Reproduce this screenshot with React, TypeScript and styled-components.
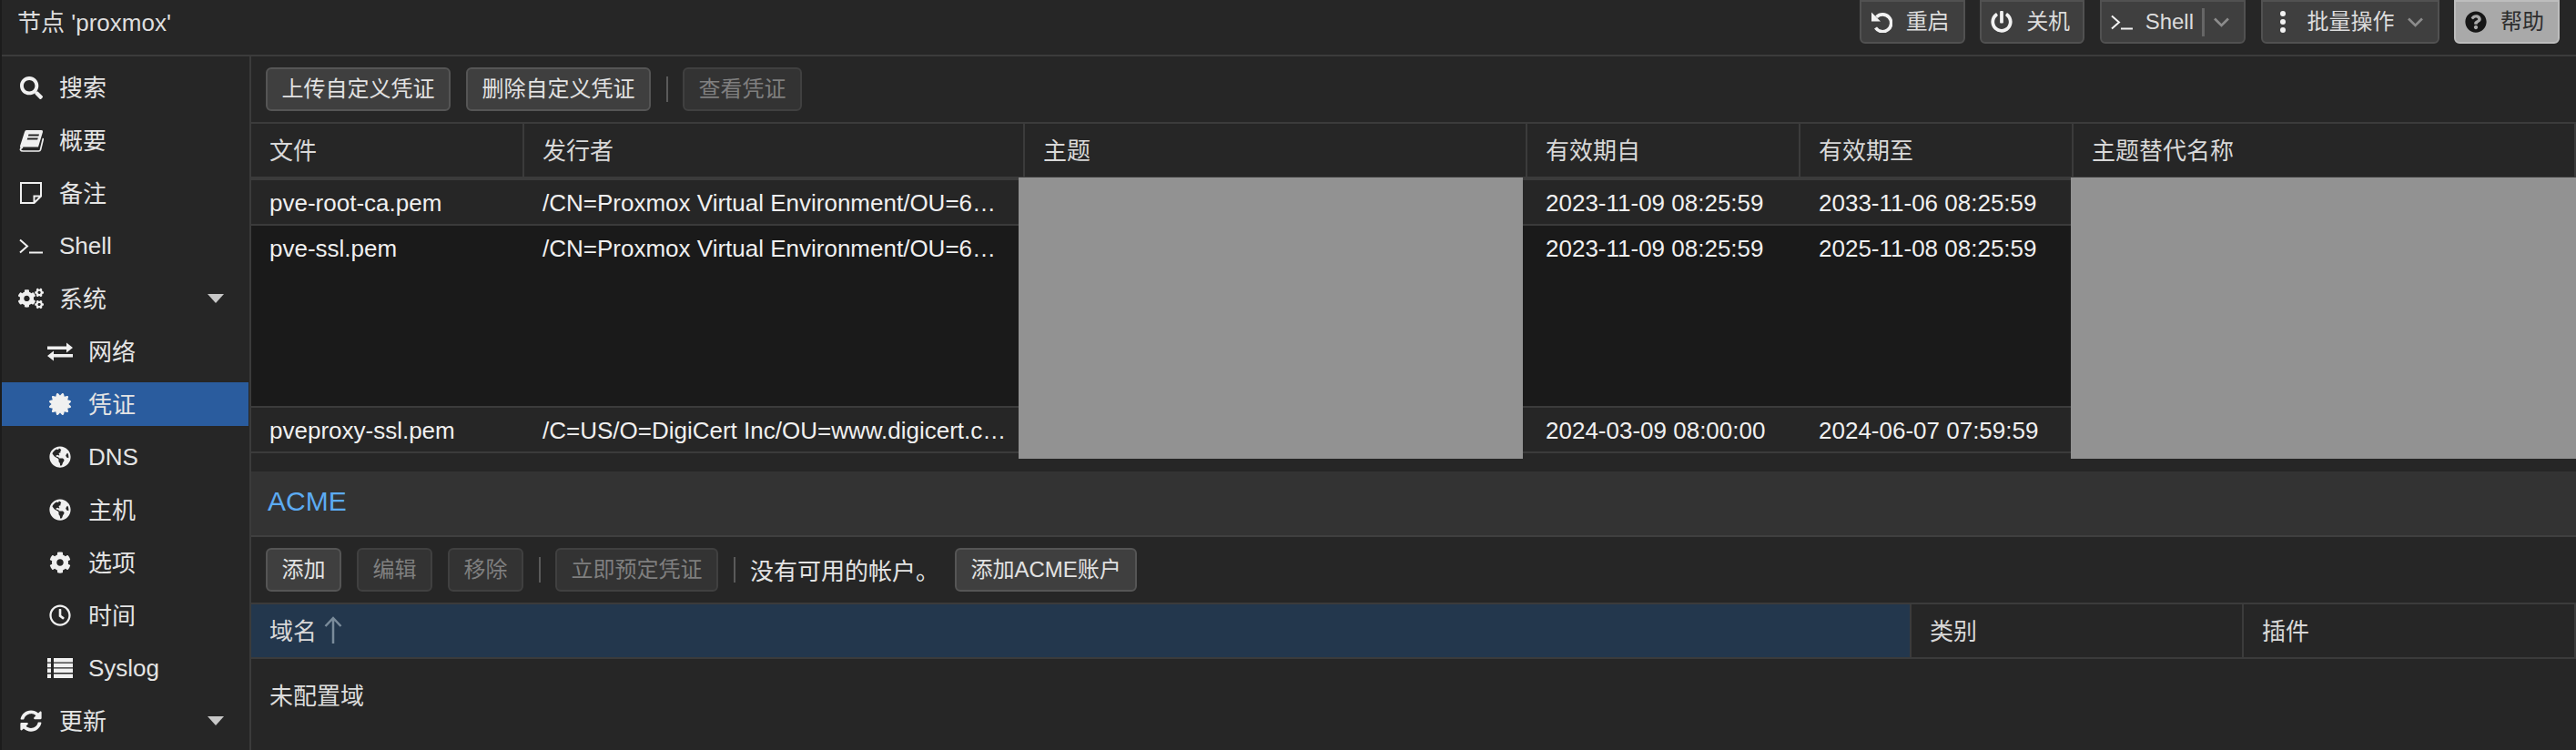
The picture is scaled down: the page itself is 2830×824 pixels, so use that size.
import React from 'react';
import styled, { createGlobalStyle } from 'styled-components';
import {
  FaSearch, FaCogs, FaCertificate, FaGlobeAmericas, FaCog, FaRegClock, FaSyncAlt,
  FaPowerOff, FaQuestionCircle,
} from 'react-icons/fa';

const Global = createGlobalStyle`
  html, body { margin: 0; padding: 0; background: #262626; }
  body { font-family: "Liberation Sans", "Noto Sans CJK SC", sans-serif; overflow: hidden; }
  * { box-sizing: border-box; }
`;

const Page = styled.div`
  width: 2830px; height: 824px; display: flex; flex-direction: column;
  background: #262626; color: #ececec; border-left: 2px solid #1c1c1c; overflow: hidden;
`;
const TopBar = styled.header`
  height: 62px; flex: none; display: flex; justify-content: space-between; align-items: flex-start;
  border-bottom: 2px solid #3b3b3b; padding-right: 18px;
`;
const NodeTitle = styled.div`
  font-size: 26px; line-height: 50px; padding-left: 17px; color: #dedede;
`;
const TopActions = styled.div`
  display: flex; gap: 16.5px;
`;
const TopButton = styled.button<{ $help?: boolean }>`
  height: 48px; display: flex; align-items: center; padding: 0 0 0 10px; margin: 0;
  border-radius: 0 0 6px 6px; border: 2px solid ${p => (p.$help ? '#bdbdbd' : '#515151')};
  background: ${p => (p.$help ? '#a9a9a9' : '#3f3f3f')};
  color: ${p => (p.$help ? '#2e2e2e' : '#dcdcdc')};
  font: inherit; font-size: 24px; line-height: 44px;
`;
const TopIcon = styled.span<{ $dark?: boolean }>`
  width: 24px; height: 24px; display: flex; align-items: center; justify-content: center;
  color: ${p => (p.$dark ? '#161616' : '#f2f2f2')}; flex: none;
`;
const TopLabel = styled.span<{ $left: number; $right: number }>`
  margin-left: ${p => p.$left}px; margin-right: ${p => p.$right}px; white-space: nowrap;
`;
const SplitBar = styled.span`
  width: 3px; height: 31px; background: #666; flex: none; margin-right: 10px;
`;
const Chevron = styled.svg`
  width: 17px; height: 11px; flex: none; display: block; margin-right: 16px;
`;

const Body = styled.div`
  flex: 1; display: flex; min-height: 0;
`;
const Sidebar = styled.nav`
  width: 274px; flex: none; border-right: 2px solid #3b3b3b; padding-top: 10px;
  display: flex; flex-direction: column; gap: 10px;
`;
const NavRow = styled.div<{ $sub?: boolean; $active?: boolean }>`
  height: 48px; flex: none; margin-right: 1px; display: flex; align-items: center;
  padding-left: ${p => (p.$sub ? 50 : 18)}px;
  background: ${p => (p.$active ? '#2a5c9e' : 'transparent')};
  font-size: 26px; color: #e4e4e4;
`;
const NavIcon = styled.span`
  width: 28px; height: 28px; display: flex; align-items: center; justify-content: center;
  color: #f0f0f0; flex: none; margin-right: 17px;
`;
const NavLabel = styled.span<{ $cjk: boolean }>`
  padding-bottom: ${p => (p.$cjk ? 4 : 0)}px;
`;
const NavCaret = styled.span`
  margin-left: auto; margin-right: 27px; width: 0; height: 0;
  border-left: 9px solid transparent; border-right: 9px solid transparent;
  border-top: 10px solid #c8c8c8;
`;

const Main = styled.main`
  flex: 1; min-width: 0; display: flex; flex-direction: column;
`;
const Toolbar = styled.div`
  height: 74px; flex: none; display: flex; align-items: center; gap: 17px; padding: 0 16px;
  border-bottom: 2px solid #3b3b3b;
`;
const ActionButton = styled.button<{ $disabled?: boolean }>`
  height: 48px; padding: 0 15.5px; margin: 0; border-radius: 6px; white-space: nowrap;
  border: 2px solid ${p => (p.$disabled ? '#404040' : '#555')};
  background: ${p => (p.$disabled ? '#333' : '#3f3f3f')};
  color: ${p => (p.$disabled ? '#7f7f7f' : '#e2e2e2')};
  font: inherit; font-size: 24px; line-height: 44px;
`;
const ToolSep = styled.span`
  width: 2px; height: 28px; background: #5a5a5a; flex: none; margin-right: -1px;
`;
const ToolText = styled.span`
  font-size: 26px; color: #e4e4e4; white-space: nowrap; padding-bottom: 2px;
`;

const Table = styled.section`
  position: relative; flex: none;
`;
const certCols = '300px 550px 552px 300px 300px 1fr';
const HeadRow = styled.div<{ $cols: string }>`
  display: grid; grid-template-columns: ${p => p.$cols}; height: 62px;
  border-bottom: 4px solid #3b3b3b;
`;
const HeadCell = styled.div<{ $sorted?: boolean }>`
  display: flex; align-items: center; gap: 8px; padding: 0 0 3px 20px; font-size: 26px; color: #d8d8d8;
  border-right: 2px solid #3b3b3b; height: 100%;
  background: ${p => (p.$sorted ? '#23374d' : 'transparent')};
`;
const Row = styled.div<{ $tall?: boolean; $dark?: boolean }>`
  display: grid; grid-template-columns: ${certCols};
  height: ${p => (p.$tall ? 200 : 50)}px;
  background: ${p => (p.$dark ? '#1a1a1a' : '#262626')};
  border-bottom: 2px solid #3b3b3b;
`;
const Cell = styled.div`
  padding: 0 0 0 20px; font-size: 26px; line-height: 50px; color: #f0f0f0;
  white-space: nowrap; min-width: 0;
`;
const Redaction = styled.div<{ $left: number; $width: number }>`
  position: absolute; top: 59px; height: 309px; left: ${p => p.$left}px; width: ${p => p.$width}px;
  background: #929292;
`;
const PanelTitle = styled.h2`
  margin: 20px 0 0; height: 72px; flex: none; background: #333; border-bottom: 2px solid #3f3f3f;
  font-size: 30px; font-weight: 400; line-height: 66px; padding-left: 18px; color: #5cabf2;
`;
const AcmeHead = styled(HeadRow)`
  height: 60px; border-bottom-width: 2px;
`;
const EmptyNote = styled.div`
  font-size: 26px; color: #dcdcdc; padding: 20px 20px 0;
`;

const Svg = ({ w, h, children }: { w: number; h: number; children: React.ReactNode }) => (
  <svg width={w} height={h} viewBox={`0 0 ${w} ${h}`} fill="currentColor" aria-hidden="true">{children}</svg>
);
const BookIcon = () => (
  <Svg w={27} h={25}>
    <path d="M8 1H24.5Q26.5 1 26 3L21 19.5H5Q2.5 19.5 1.5 21L1 18.5L6 3Q6.5 1 8 1Z" />
    <path d="M4 20Q1 21 1.5 22.6Q2 24 4.5 24H21.5Q23 24 23.5 22.5L26.5 10" fill="none" stroke="currentColor" strokeWidth="1.7" />
    <path d="M10.5 5.5H22L21.4 7.5H9.9ZM9.3 9.5H20.8L20.2 11.5H8.7Z" fill="#262626" />
  </Svg>
);
const NoteIcon = () => (
  <Svg w={24} h={24}>
    <path d="M1 1H23V15.5L15.5 23H1Z M15.5 23V15.5H23" fill="none" stroke="currentColor" strokeWidth="2" />
  </Svg>
);
const TermIcon = ({ w = 26 }: { w?: number }) => (
  <Svg w={w} h={17}>
    <path d="M1 1.5L9 8.5L1 15.5" fill="none" stroke="currentColor" strokeWidth="2" />
    <path d={`M11 15.5H${w}`} fill="none" stroke="currentColor" strokeWidth="2" />
  </Svg>
);
const ExchangeIcon = () => (
  <Svg w={28} h={21}>
    <path d="M0 4.5H21V0.5L28 6L21 11.5V8H0Z" />
    <path d="M28 13H7V9.5L0 15L7 20.5V16.5H28Z" />
  </Svg>
);
const ListIcon = () => (
  <Svg w={28} h={22}>
    <path d="M0 0H4V4.5H0ZM7 0H28V4.5H7ZM0 5.8H4V10.3H0ZM7 5.8H28V10.3H7ZM0 11.6H4V16.1H0ZM7 11.6H28V16.1H7ZM0 17.4H4V22H0ZM7 17.4H28V22H7Z" />
  </Svg>
);
const UndoIcon = () => (
  <Svg w={24} h={24}>
    <path d="M6.5 6.8A9.4 9.4 0 1 1 5.5 18.6" fill="none" stroke="currentColor" strokeWidth="3.6" />
    <path d="M1 1.5V11.5H11Z" />
  </Svg>
);
const DotsIcon = () => (
  <Svg w={8} h={26}>
    <circle cx="4" cy="4" r="3" /><circle cx="4" cy="13" r="3" /><circle cx="4" cy="22" r="3" />
  </Svg>
);
const SmallChevron = () => (
  <Chevron viewBox="0 0 17 11">
    <path d="M1 1.5L8.5 9L16 1.5" fill="none" stroke="#8c8c8c" strokeWidth="2.6" />
  </Chevron>
);
const SortArrow = () => (
  <svg width="20" height="30" viewBox="0 0 20 30" aria-hidden="true">
    <path d="M10 30V2M1.5 11L10 2L18.5 11" fill="none" stroke="#7a8b9a" strokeWidth="2.5" />
  </svg>
);

type Nav = { label: string; icon: React.ReactNode; sub?: boolean; active?: boolean; caret?: boolean; latin?: boolean };
const nav: Nav[] = [
  { label: '搜索', icon: <FaSearch size={25} /> },
  { label: '概要', icon: <BookIcon /> },
  { label: '备注', icon: <NoteIcon /> },
  { label: 'Shell', icon: <TermIcon />, latin: true },
  { label: '系统', icon: <FaCogs size={30} />, caret: true },
  { label: '网络', icon: <ExchangeIcon />, sub: true },
  { label: '凭证', icon: <FaCertificate size={24} />, sub: true, active: true },
  { label: 'DNS', icon: <FaGlobeAmericas size={24} />, sub: true, latin: true },
  { label: '主机', icon: <FaGlobeAmericas size={24} />, sub: true },
  { label: '选项', icon: <FaCog size={24} />, sub: true },
  { label: '时间', icon: <FaRegClock size={24} />, sub: true },
  { label: 'Syslog', icon: <ListIcon />, sub: true, latin: true },
  { label: '更新', icon: <FaSyncAlt size={24} />, caret: true },
];

const certs = [
  { file: 'pve-root-ca.pem', issuer: '/CN=Proxmox Virtual Environment/OU=6…', from: '2023-11-09 08:25:59', to: '2033-11-06 08:25:59' },
  { file: 'pve-ssl.pem', issuer: '/CN=Proxmox Virtual Environment/OU=6…', from: '2023-11-09 08:25:59', to: '2025-11-08 08:25:59', tall: true, dark: true },
  { file: 'pveproxy-ssl.pem', issuer: '/C=US/O=DigiCert Inc/OU=www.digicert.c…', from: '2024-03-09 08:00:00', to: '2024-06-07 07:59:59' },
];

export default function App() {
  return (
    <Page>
      <Global />
      <TopBar>
        <NodeTitle>节点 'proxmox'</NodeTitle>
        <TopActions>
          <TopButton><TopIcon><UndoIcon /></TopIcon><TopLabel $left={15} $right={15}>重启</TopLabel></TopButton>
          <TopButton><TopIcon><FaPowerOff size={24} /></TopIcon><TopLabel $left={15} $right={14}>关机</TopLabel></TopButton>
          <TopButton><TopIcon><TermIcon w={24} /></TopIcon><TopLabel $left={14} $right={9}>Shell</TopLabel><SplitBar /><SmallChevron /></TopButton>
          <TopButton><TopIcon><DotsIcon /></TopIcon><TopLabel $left={15} $right={14}>批量操作</TopLabel><SmallChevron /></TopButton>
          <TopButton $help><TopIcon $dark><FaQuestionCircle size={24} /></TopIcon><TopLabel $left={15} $right={15}>帮助</TopLabel></TopButton>
        </TopActions>
      </TopBar>
      <Body>
        <Sidebar>
          {nav.map(n => (
            <NavRow key={n.label} $sub={n.sub} $active={n.active}>
              <NavIcon>{n.icon}</NavIcon>
              <NavLabel $cjk={!n.latin}>{n.label}</NavLabel>
              {n.caret && <NavCaret />}
            </NavRow>
          ))}
        </Sidebar>
        <Main>
          <Toolbar>
            <ActionButton>上传自定义凭证</ActionButton>
            <ActionButton>删除自定义凭证</ActionButton>
            <ToolSep />
            <ActionButton $disabled>查看凭证</ActionButton>
          </Toolbar>
          <Table>
            <HeadRow $cols={certCols}>
              {['文件', '发行者', '主题', '有效期自', '有效期至', '主题替代名称'].map(h => <HeadCell key={h}>{h}</HeadCell>)}
            </HeadRow>
            {certs.map(c => (
              <Row key={c.file} $tall={c.tall} $dark={c.dark}>
                <Cell>{c.file}</Cell>
                <Cell>{c.issuer}</Cell>
                <Cell />
                <Cell>{c.from}</Cell>
                <Cell>{c.to}</Cell>
                <Cell />
              </Row>
            ))}
            <Redaction $left={843} $width={554} />
            <Redaction $left={1999} $width={555} />
          </Table>
          <PanelTitle>ACME</PanelTitle>
          <Toolbar>
            <ActionButton>添加</ActionButton>
            <ActionButton $disabled>编辑</ActionButton>
            <ActionButton $disabled>移除</ActionButton>
            <ToolSep />
            <ActionButton $disabled>立即预定凭证</ActionButton>
            <ToolSep />
            <ToolText>没有可用的帐户。</ToolText>
            <ActionButton>添加ACME账户</ActionButton>
          </Toolbar>
          <AcmeHead $cols="1824px 365px 1fr">
            <HeadCell $sorted>域名<SortArrow /></HeadCell>
            <HeadCell>类别</HeadCell>
            <HeadCell>插件</HeadCell>
          </AcmeHead>
          <EmptyNote>未配置域</EmptyNote>
        </Main>
      </Body>
    </Page>
  );
}
